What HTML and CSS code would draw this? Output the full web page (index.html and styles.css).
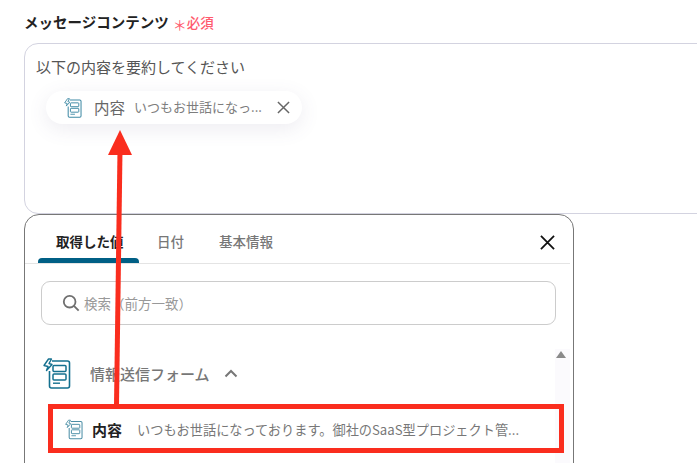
FILE: index.html
```html
<!DOCTYPE html>
<html lang="ja">
<head>
<meta charset="utf-8">
<title>メッセージコンテンツ</title>
<link rel="stylesheet" href="styles.css">
</head>
<body>
<svg class="defs" width="0" height="0" aria-hidden="true">
  <symbol id="form-icon" viewBox="0 0 28 31">
    <path d="M9 3H24.5A2 2 0 0 1 26.5 5V28A2 2 0 0 1 24.5 30H8.5A2 2 0 0 1 6.5 28V13" fill="none" stroke="currentColor" stroke-width="1.6"/>
    <path d="M5.5 1L1 7.5L5 8.5L3.5 12.5L9 6.5L6 5.5L8.5 1Z" fill="#fff" stroke="currentColor" stroke-width="1.4" stroke-linejoin="round"/>
    <rect x="10" y="7.5" width="13" height="6" rx="1" fill="none" stroke="currentColor" stroke-width="1.5"/>
    <rect x="10" y="16" width="13" height="6" rx="1" fill="none" stroke="currentColor" stroke-width="1.5"/>
    <path d="M10 25.2H17" fill="none" stroke="currentColor" stroke-width="1.4"/>
  </symbol>
</svg>
<main class="page">
  <div class="field-label">
    <span class="label-text">メッセージコンテンツ</span>
    <span class="required"><span class="asterisk">＊</span><span class="required-text">必須</span></span>
  </div>
  <div class="message-box">
    <p class="message-text">以下の内容を要約してください</p>
    <div class="chip">
      <svg class="chip-icon"><use href="#form-icon"/></svg>
      <span class="chip-name">内容</span>
      <span class="chip-value">いつもお世話になっ...</span>
      <svg class="chip-close" viewBox="0 0 14 14"><path d="M1 1L13 13M13 1L1 13"/></svg>
    </div>
  </div>
  <section class="panel">
    <div class="tabs">
      <span class="tab tab-active">取得した値</span>
      <span class="tab tab-date">日付</span>
      <span class="tab tab-info">基本情報</span>
      <svg class="panel-close" viewBox="0 0 16 16"><path d="M1 1L15 15M15 1L1 15"/></svg>
    </div>
    <div class="search">
      <svg class="search-icon" viewBox="0 0 20 20"><circle cx="8.5" cy="8.5" r="6.5"/><path d="M13.5 13.5L18.5 18.5"/></svg>
      <span class="search-text">検索（前方一致）</span>
    </div>
    <div class="list">
      <div class="group-head">
        <svg class="group-icon"><use href="#form-icon"/></svg>
        <span class="group-name">情報送信フォーム</span>
        <svg class="chevron" viewBox="0 0 14 9"><path d="M1.5 7.5L7 2L12.5 7.5"/></svg>
      </div>
      <div class="row">
        <svg class="row-icon"><use href="#form-icon"/></svg>
        <span class="row-name">内容</span>
        <span class="row-value">いつもお世話になっております。御社のSaaS型プロジェクト管...</span>
      </div>
      <div class="scrollbar"><span class="scroll-up"></span></div>
    </div>
  </section>
</main>
<svg class="annotation" viewBox="0 0 697 463" aria-hidden="true">
  <path class="arrow-line" d="M116.5 405L120 150"/>
  <path class="arrow-head" d="M120 130L132 155H108Z"/>
  <rect class="highlight" x="50.5" y="406.5" width="511" height="44"/>
</svg>
</body>
</html>
```
FILE: styles.css
```css
* { box-sizing: border-box; }
html, body { margin: 0; height: 463px; overflow: hidden; background: #fff; }
body { position: relative; font-family: "Noto Sans CJK JP", "Noto Sans", sans-serif; color: #333; }
.defs { position: absolute; }
.page { display: flex; flex-direction: column; padding: 13px 0 0 24px; width: 697px; height: 463px; overflow: hidden; }
.field-label { display: flex; align-items: center; height: 18px; margin-bottom: 12px; flex: none; }
.label-text { font-size: 14.5px; font-weight: 700; color: #222; line-height: 18px; }
.required { color: #ff5a6e; margin-left: 4px; display: flex; align-items: center; }
.asterisk { font-size: 14px; line-height: 18px; margin-top: 4px; font-weight: 400; }
.required-text { font-size: 13.5px; font-weight: 500; line-height: 18px; margin-top: 0; }
.message-box { height: 171px; width: 720px; border: 1px solid #d3d3e0; border-radius: 14px; padding: 12px 11px; flex: none; }
.message-text { margin: 0; font-size: 15px; line-height: 22px; color: #555; }
.chip { display: flex; align-items: center; width: 256px; height: 33px; margin: 13px 0 0 10px; padding-left: 18px; border-radius: 17px; background: #fff; box-shadow: 0 5px 20px rgba(90, 80, 130, .11); }
.chip-icon { width: 18px; height: 20px; color: #3f8aa5; flex: none; }
.chip-name { font-size: 15.5px; color: #666; margin-left: 12px; margin-bottom: 2px; }
.chip-value { font-size: 13px; color: #7d7d7d; margin-left: 9px; white-space: nowrap; margin-bottom: 2px; }
.chip-close { width: 13px; height: 13px; margin-left: 15px; fill: none; stroke: #666; stroke-width: 1.6; flex: none; }
.panel { width: 550px; height: 300px; border: 1px solid #777; border-radius: 15px; flex: none; }
.tabs { display: flex; align-items: flex-start; height: 49px; border-bottom: 1px solid #e4e4e4; margin-right: 3px; position: relative; }
.tab { font-size: 13.5px; font-weight: 500; line-height: 18px; margin-top: 17px; color: #777; }
.tab-active { width: 101px; height: 31px; margin-left: 13px; padding-left: 18px; color: #222; position: relative; font-weight: 700; white-space: nowrap; }
.tab-active::after { content: ""; position: absolute; left: 0; right: 0; bottom: 0; height: 5px; background: #005f85; border-radius: 4px 4px 0 0; }
.tab-date { margin-left: 18px; }
.tab-info { margin-left: 35px; }
.panel-close { position: absolute; width: 15px; height: 15px; left: 515px; top: 20px; fill: none; stroke: #111; stroke-width: 1.9; }
.search { display: flex; align-items: center; width: 515px; height: 44px; margin: 17px 0 0 16px; padding-left: 20px; border: 1px solid #ccc; border-radius: 9px; }
.search-icon { width: 18px; height: 18px; fill: none; stroke: #6f6f6f; stroke-width: 2; flex: none; }
.search-text { font-size: 13.5px; color: #999; margin-left: 4px; }
.list { position: relative; padding-top: 19px; height: 200px; }
.group-head { display: flex; align-items: center; height: 58px; padding: 0 0 0 18px; }
.group-icon { width: 28px; height: 31px; color: #14708f; flex: none; }
.group-name { font-size: 15px; font-weight: 500; color: #777; margin-left: 19px; }
.chevron { width: 14px; height: 9px; margin-left: 14px; fill: none; stroke: #777; stroke-width: 2; }
.row { display: flex; align-items: center; width: 505px; height: 40px; margin: 7px 0 0 27px; padding-left: 13px; background: #fff; }
.row-icon { width: 18px; height: 21px; color: #4b8ea6; flex: none; }
.row-name { font-size: 15px; font-weight: 700; color: #222; margin-left: 9px; }
.row-value { font-size: 13.2px; color: #777; margin-left: 15px; white-space: nowrap; }
.scrollbar { position: absolute; left: 530px; top: 24px; width: 15px; height: 160px; background: #fbfafd; }
.scroll-up { display: block; width: 0; height: 0; margin: 2px 0 0 1px; border-left: 5px solid transparent; border-right: 5px solid transparent; border-bottom: 7px solid #8a8a8a; }
.annotation { position: absolute; left: 0; top: 0; width: 697px; height: 463px; pointer-events: none; }
.arrow-line { fill: none; stroke: #fa2d1e; stroke-width: 5; }
.arrow-head { fill: #fa2d1e; }
.highlight { fill: none; stroke: #fa2d1e; stroke-width: 5; }
```
